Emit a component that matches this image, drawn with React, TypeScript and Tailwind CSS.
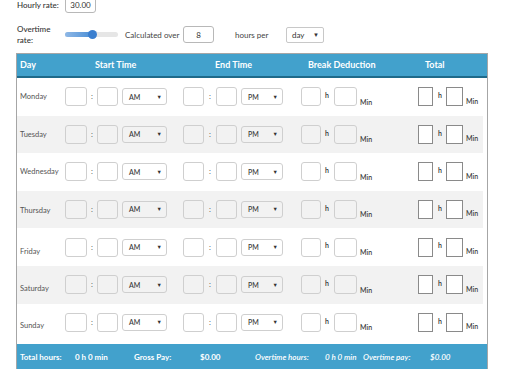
import React from "react";

const days = [
  { name: "Monday", off: 0 },
  { name: "Tuesday", off: 0 },
  { name: "Wednesday", off: 0 },
  { name: "Thursday", off: 3 },
  { name: "Friday", off: 9 },
  { name: "Saturday", off: 8 },
  { name: "Sunday", off: 6 },
];

function Box({ w, gray, dark }: { w: string; gray?: boolean; dark?: boolean }) {
  return (
    <div
      className={`${w} h-[19px] shrink-0 rounded-[3px] border ${
        dark ? "border-[#8a8a8a] rounded-none bg-white" : gray ? "border-[#cfcfcf] bg-[#f2f2f2]" : "border-[#cfcfcf] bg-white"
      }`}
    />
  );
}

function Sel({ w, label, gray }: { w: string; label: string; gray?: boolean }) {
  return (
    <div
      className={`${w} h-[17px] shrink-0 rounded-[3px] border border-[#cfcfcf] ${
        gray ? "bg-[#f2f2f2]" : "bg-white"
      } flex items-center justify-between pl-[6px] pr-[4px] text-[7px] font-medium text-[#333]`}
    >
      <span>{label}</span>
      <span className="text-[5.5px]">▼</span>
    </div>
  );
}

export default function App() {
  return (
    <div
      className="w-[512px] h-[369px] overflow-hidden bg-white text-[#444]"
      style={{ fontFamily: "Lato, 'Open Sans', sans-serif" }}
    >
      {/* Hourly rate */}
      <div className="-mt-[3px] flex items-center h-[16px]">
        <span className="ml-[17px] w-[48px] text-[8px] font-medium text-[#333]">Hourly rate:</span>
        <div className="w-[31px] h-[16px] rounded-[3px] border border-[#b8b8b8] flex items-center justify-center text-[8px] text-[#333]">
          30.00
        </div>
      </div>
      {/* Overtime */}
      <div className="mt-[13px] flex items-center h-[17px]">
        <div className="ml-[17px] w-[48px] text-[8px] font-medium text-[#333] leading-[11px]">
          Overtime
          <br />
          rate:
        </div>
        <div className="w-[53px] h-[5px] rounded-full bg-[#e6e6e6] flex items-center">
          <div className="w-[27px] h-[5px] rounded-l-full bg-gradient-to-r from-[#8fb8e6] to-[#4a8fd6]" />
          <div className="-ml-[4px] w-[9px] h-[9px] rounded-full bg-[#3b7fcf]" />
        </div>
        <span className="ml-[7px] w-[58px] text-[8px] text-[#444]">Calculated over</span>
        <div className="w-[31px] h-[17px] rounded-[3px] border border-[#b8b8b8] flex items-center justify-center text-[8px] text-[#333]">
          8
        </div>
        <span className="ml-[21px] w-[51px] text-[8px] text-[#444]">hours per</span>
        <div className="w-[38px] h-[16px] rounded-[2px] border border-[#c8c8c8] flex items-center justify-between pl-[5px] pr-[4px] text-[8px] text-[#333]">
          <span>day</span>
          <span className="text-[6px]">▼</span>
        </div>
      </div>

      {/* Table */}
      <div className="mt-[10px] ml-[16px] w-[472px] border-l border-r border-t border-[#a6a6a6]">
        <div className="h-[24px] bg-[#42a1cc] border-b-2 border-[#1f6a8a] flex items-center text-[9px] font-bold text-white">
          <span className="pl-[3px] w-[78px]">Day</span>
          <span className="w-[120px]">Start Time</span>
          <span className="w-[93px]">End Time</span>
          <span className="w-[117px]">Break Deduction</span>
          <span>Total</span>
        </div>
        {days.map((d, i) => {
          const gray = i % 2 === 1;
          return (
            <div
              key={d.name}
              className={`h-[37.6px] mr-[4px] flex items-center text-[7.5px] text-[#555] ${gray ? "bg-[#f2f2f2]" : "bg-white"}`}
            >
              <span className="pl-[3px] w-[48px] shrink-0" style={{ paddingTop: d.off }}>
                {d.name}
              </span>
              <Box w="w-[22px]" gray={gray} />
              <span className="w-[10px] text-center">:</span>
              <Box w="w-[21px]" gray={gray} />
              <div className="ml-[4px]">
                <Sel w="w-[45px]" label="AM" gray={gray} />
              </div>
              <div className="ml-[16px]">
                <Box w="w-[21px]" gray={gray} />
              </div>
              <span className="w-[12px] text-center">:</span>
              <Box w="w-[21px]" gray={gray} />
              <div className="ml-[4px]">
                <Sel w="w-[42px]" label="PM" gray={gray} />
              </div>
              <div className="ml-[18px]">
                <Box w="w-[20px]" gray={gray} />
              </div>
              <span className="w-[13px] pl-[4px] pb-[3px] text-[7px] font-semibold text-[#333]">h</span>
              <Box w="w-[23px]" gray={gray} />
              <span className="w-[61px] pl-[3px] pt-[10px] text-[7px] font-semibold text-[#444]">Min</span>
              <Box w="w-[15px]" dark />
              <span className="w-[13px] pl-[5px] pb-[3px] text-[7px] font-semibold text-[#333]">h</span>
              <Box w="w-[17px]" dark />
              <span className="pl-[3px] pt-[8px] text-[7px] font-semibold text-[#444]">Min</span>
            </div>
          );
        })}
        <div className="mt-[3px] h-[30px] bg-[#42a1cc] flex items-start pt-[7px] text-[8px] font-bold text-white">
          <span className="pl-[3px] w-[58px]">Total hours:</span>
          <span className="w-[59px]">0 h 0 min</span>
          <span className="w-[66px]">Gross Pay:</span>
          <span className="w-[55px]">$0.00</span>
          <span className="w-[70px] italic font-semibold">Overtime hours:</span>
          <span className="w-[38px] italic font-semibold">0 h 0 min</span>
          <span className="w-[67px] italic font-semibold">Overtime pay:</span>
          <span className="italic font-semibold">$0.00</span>
        </div>
      </div>
    </div>
  );
}
